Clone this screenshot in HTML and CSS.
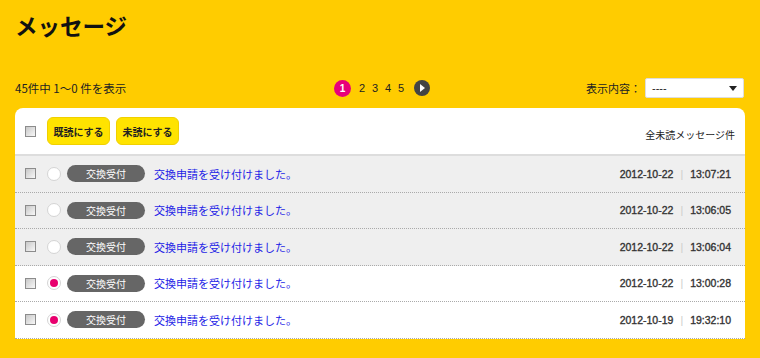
FILE: index.html
```html
<!DOCTYPE html>
<html lang="ja">
<head>
    <meta charset="UTF-8">
    <title>メッセージ</title>
    <link rel="stylesheet" href="styles.css">
</head>
<body>
    <div class="page">
        <h1 class="title">メッセージ</h1>

        <!-- 件数・ページャー・絞り込み -->
        <div class="toolbar">
            <div class="count">45件中 1〜0 件を表示</div>
            <div class="pager">
                <span class="pg-current">1</span>
                <a class="pg-num">2</a>
                <a class="pg-num">3</a>
                <a class="pg-num">4</a>
                <a class="pg-num">5</a>
                <a class="pg-next"></a>
            </div>
            <div class="filter">
                <label>表示内容：</label>
                <div class="select">----<span class="select-arrow"></span></div>
            </div>
        </div>

        <div class="panel">
            <div class="panel-head">
                <input type="checkbox" class="check">
                <button class="btn">既読にする</button>
                <button class="btn">未読にする</button>
                <div class="unread-total">全未読メッセージ件</div>
            </div>

            <ul class="msg-list">
                <li class="msg read">
                    <input type="checkbox" class="check">
                    <span class="dot"></span>
                    <span class="badge">交換受付</span>
                    <a class="msg-text">交換申請を受け付けました。</a>
                    <span class="msg-date">2012-10-22<span class="sep">|</span>13:07:21</span>
                </li>
                <li class="msg read">
                    <input type="checkbox" class="check">
                    <span class="dot"></span>
                    <span class="badge">交換受付</span>
                    <a class="msg-text">交換申請を受け付けました。</a>
                    <span class="msg-date">2012-10-22<span class="sep">|</span>13:06:05</span>
                </li>
                <li class="msg read">
                    <input type="checkbox" class="check">
                    <span class="dot"></span>
                    <span class="badge">交換受付</span>
                    <a class="msg-text">交換申請を受け付けました。</a>
                    <span class="msg-date">2012-10-22<span class="sep">|</span>13:06:04</span>
                </li>
                <li class="msg">
                    <input type="checkbox" class="check">
                    <span class="dot unread"></span>
                    <span class="badge">交換受付</span>
                    <a class="msg-text">交換申請を受け付けました。</a>
                    <span class="msg-date">2012-10-22<span class="sep">|</span>13:00:28</span>
                </li>
                <li class="msg">
                    <input type="checkbox" class="check">
                    <span class="dot unread"></span>
                    <span class="badge">交換受付</span>
                    <a class="msg-text">交換申請を受け付けました。</a>
                    <span class="msg-date">2012-10-19<span class="sep">|</span>19:32:10</span>
                </li>
            </ul>
        </div>
    </div>
</body>
</html>
```

FILE: styles.css
```css
body {
    margin: 0;
    background: #ffcc00;
    font-family: "Noto Sans CJK JP", "Liberation Sans", sans-serif;
    color: #222;
}
.page {
    padding: 0 15px;
}
.title {
    margin: 0;
    padding-top: 8px;
    font-size: 22.5px;
    line-height: 34px;
    font-weight: bold;
    color: #111;
}
.toolbar {
    display: grid;
    grid-template-columns: 1fr auto 1fr;
    align-items: center;
    height: 20px;
    margin-top: 36px;
    margin-bottom: 10px;
}
.count {
    font-size: 11.5px;
}
.pager {
    display: flex;
    align-items: center;
    gap: 7px;
    font-size: 11px;
    font-family: "Liberation Sans", sans-serif;
    margin-left: 4px;
}
.pg-current {
    width: 17px;
    height: 17px;
    border-radius: 50%;
    background: #e8007a;
    color: #fff;
    font-weight: bold;
    font-size: 10px;
    display: flex;
    align-items: center;
    justify-content: center;
    margin-right: 1px;
}
.pg-num {
    width: 6px;
    color: #222;
}
.pg-next {
    width: 16px;
    height: 16px;
    border-radius: 50%;
    background: #444;
    position: relative;
    margin-left: 3px;
}
.pg-next::after {
    content: "";
    position: absolute;
    left: 6px;
    top: 4px;
    border-left: 5px solid #fff;
    border-top: 4px solid transparent;
    border-bottom: 4px solid transparent;
}
.filter {
    display: flex;
    justify-content: flex-end;
    align-items: center;
    gap: 4px;
    font-size: 11px;
}
.select {
    width: 91px;
    height: 18px;
    background: #fff;
    border: 1px solid #ddd;
    border-radius: 2px;
    font-family: "Liberation Sans", sans-serif;
    font-size: 11px;
    line-height: 18px;
    padding-left: 6px;
    box-sizing: content-box;
    position: relative;
    margin-right: 1px;
}
.select-arrow {
    position: absolute;
    right: 6px;
    top: 7px;
    border-top: 5px solid #222;
    border-left: 4px solid transparent;
    border-right: 4px solid transparent;
}
.panel {
    background: #fff;
    border-radius: 8px 8px 0 0;
}
.panel-head {
    display: flex;
    align-items: center;
    height: 46px;
    padding: 0 10px;
    border-bottom: 2px solid #ddd;
}
.check {
    appearance: none;
    margin: 0;
    width: 11px;
    height: 11px;
    border: 1px solid #8c8c8c;
    background: linear-gradient(135deg, #c8c8c8, #f8f8f8);
    box-sizing: border-box;
    flex: none;
}
.btn {
    font-family: inherit;
    font-size: 10px;
    font-weight: bold;
    color: #222;
    background: #ffe300;
    border: 1px solid #f0d000;
    border-radius: 6px;
    width: 63px;
    height: 28px;
    padding: 0;
    margin-left: 6px;
}
.panel-head .btn:first-of-type {
    margin-left: 11px;
}
.unread-total {
    margin-left: auto;
    font-size: 10px;
    padding-top: 6px;
}
.msg-list {
    list-style: none;
    margin: 0;
    padding: 0;
}
.msg {
    display: flex;
    align-items: center;
    height: 36.5px;
    box-sizing: border-box;
    padding: 0 14px 0 10px;
    border-bottom: 1px dotted #aaa;
}
.msg.read {
    background: #efefef;
}
.dot {
    width: 14px;
    height: 14px;
    border-radius: 50%;
    border: 1px solid #d4d4d4;
    background: #fff;
    box-sizing: border-box;
    margin-left: 11px;
    display: flex;
    align-items: center;
    justify-content: center;
    flex: none;
}
.dot.unread::after {
    content: "";
    width: 8px;
    height: 8px;
    border-radius: 50%;
    background: #e8006e;
}
.badge {
    width: 78px;
    height: 17px;
    margin-left: 6px;
    border-radius: 9px;
    background: #666;
    color: #fff;
    font-size: 10px;
    line-height: 17px;
    text-align: center;
    flex: none;
}
.msg-text {
    margin-left: 9px;
    font-size: 11px;
    color: #1e1ee6;
}
.msg-date {
    margin-left: auto;
    font-family: "Liberation Sans", sans-serif;
    font-size: 10.5px;
    color: #333;
    -webkit-text-stroke: 0.35px #333;
}
.sep {
    color: #ccc;
    -webkit-text-stroke: 0;
    margin: 0 7px;
}
```
